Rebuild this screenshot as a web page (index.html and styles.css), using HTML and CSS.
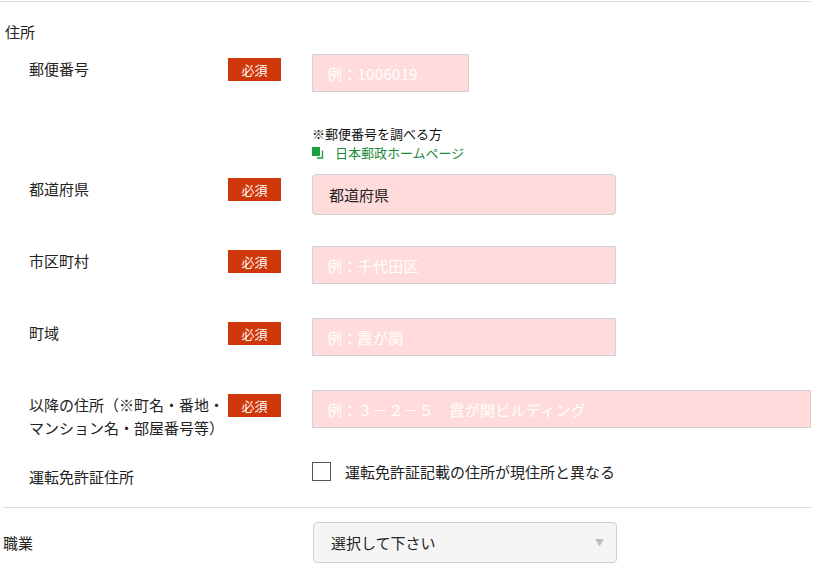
FILE: index.html
```html
<!DOCTYPE html>
<html lang="ja">
<head>
<meta charset="utf-8">
<link rel="stylesheet" href="styles.css">
</head>
<body>
<div class="form">
  <section class="sec">
    <h3 class="sec-title">住所</h3>

    <div class="row row-postal">
      <div class="label">郵便番号</div>
      <div class="badge-col"><span class="badge">必須</span></div>
      <div class="field">
        <input class="inp inp-short" type="text" placeholder="例：1006019">
        <div class="note">
          <div>※郵便番号を調べる方</div>
          <a class="link" href="#"><svg class="link-ic" width="12" height="12" viewBox="0 0 12 12"><rect x="0" y="0" width="8" height="9" fill="#17a03c"/><path d="M10.5 3.5 V11 H5" fill="none" stroke="#17a03c" stroke-width="1.3"/></svg>日本郵政ホームページ</a>
        </div>
      </div>
    </div>

    <div class="row">
      <div class="label">都道府県</div>
      <div class="badge-col"><span class="badge">必須</span></div>
      <div class="field">
        <div class="sel sel-pink">都道府県</div>
      </div>
    </div>

    <div class="row">
      <div class="label">市区町村</div>
      <div class="badge-col"><span class="badge">必須</span></div>
      <div class="field">
        <input class="inp inp-mid" type="text" placeholder="例：千代田区">
      </div>
    </div>

    <div class="row">
      <div class="label">町域</div>
      <div class="badge-col"><span class="badge">必須</span></div>
      <div class="field">
        <input class="inp inp-mid" type="text" placeholder="例：霞が関">
      </div>
    </div>

    <div class="row">
      <div class="label">以降の住所（※町名・番地・マンション名・部屋番号等）</div>
      <div class="badge-col"><span class="badge">必須</span></div>
      <div class="field">
        <input class="inp inp-wide" type="text" placeholder="例：３－２－５　霞が関ビルディング">
      </div>
    </div>

    <div class="row row-check">
      <div class="label">運転免許証住所</div>
      <div class="badge-col"></div>
      <div class="field">
        <label class="check"><span class="box"></span>運転免許証記載の住所が現住所と異なる</label>
      </div>
    </div>
  </section>

  <section class="sec sec-job">
    <div class="job-row">
      <div class="job-label">職業</div>
      <div class="sel sel-grey">選択して下さい<span class="arrow">▼</span></div>
    </div>
  </section>
</div>
</body>
</html>
```

FILE: styles.css
```css
* { box-sizing: border-box; }
html, body { margin: 0; padding: 0; background: #fff; }
body {
  padding-top: 1px;
  font-family: "Noto Sans CJK JP", "Noto Sans", sans-serif;
  font-size: 15px;
  color: #222;
}
.form { width: 811px; }
.sec { border-top: 1px solid #dcdcdc; }
.sec-title {
  margin: 18px 0 11px 5px;
  font-size: 15px;
  font-weight: normal;
  line-height: 23px;
}
.row {
  display: grid;
  grid-template-columns: 228px 53px 1fr;
  align-items: start;
  min-height: 72px;
}
.label {
  padding-left: 29px;
  margin-top: 3px;
  line-height: 23px;
  padding-right: 2px;
}
.badge-col { padding-top: 4px; }
.badge {
  display: block;
  width: 53px;
  height: 23px;
  line-height: 23px;
  background: #cf380a;
  color: #fff;
  font-size: 13px;
  text-align: center;
}
.field { padding-left: 31px; }
.inp {
  display: block;
  height: 38px;
  border: 1px solid #d2d2d2;
  background: #ffdbdb;
  padding: 0 14px;
  font-family: inherit;
  font-size: 15px;
  letter-spacing: 0.3px;
  color: #222;
  outline: none;
  border-radius: 0;
}
.inp::placeholder { color: #fff; opacity: 1; }
.inp-short { width: 157px; }
.inp-mid { width: 304px; }
.inp-wide { width: 499px; }
.note {
  margin-top: 32px;
  padding-bottom: 12px;
  font-size: 13px;
  line-height: 19px;
  color: #111;
}
.link {
  display: flex;
  align-items: center;
  color: #1c8a3a;
  text-decoration: none;
}
.link-ic { margin-right: 11px; }
.sel {
  position: relative;
  width: 304px;
  height: 41px;
  line-height: 39px;
  border: 1px solid #d0d0d0;
  border-radius: 4px;
  padding-left: 16px;
  font-size: 15px;
  color: #222;
}
.sel-pink { background: #ffdbdb; }
.sel-grey { background: #f5f5f5; padding-left: 17px; }
.arrow {
  position: absolute;
  right: 12px;
  top: 0;
  font-size: 9px;
  color: #bdbdbd;
}
.row-check { min-height: 45px; }
.check {
  display: flex;
  align-items: center;
  line-height: 19px;
}
.box {
  width: 19px;
  height: 19px;
  border: 1px solid #555;
  margin-right: 14px;
  flex: none;
}
.sec-job { margin-left: 3px; }
.job-row {
  display: flex;
  align-items: center;
  padding-top: 14px;
}
.job-label { width: 310px; }
```
